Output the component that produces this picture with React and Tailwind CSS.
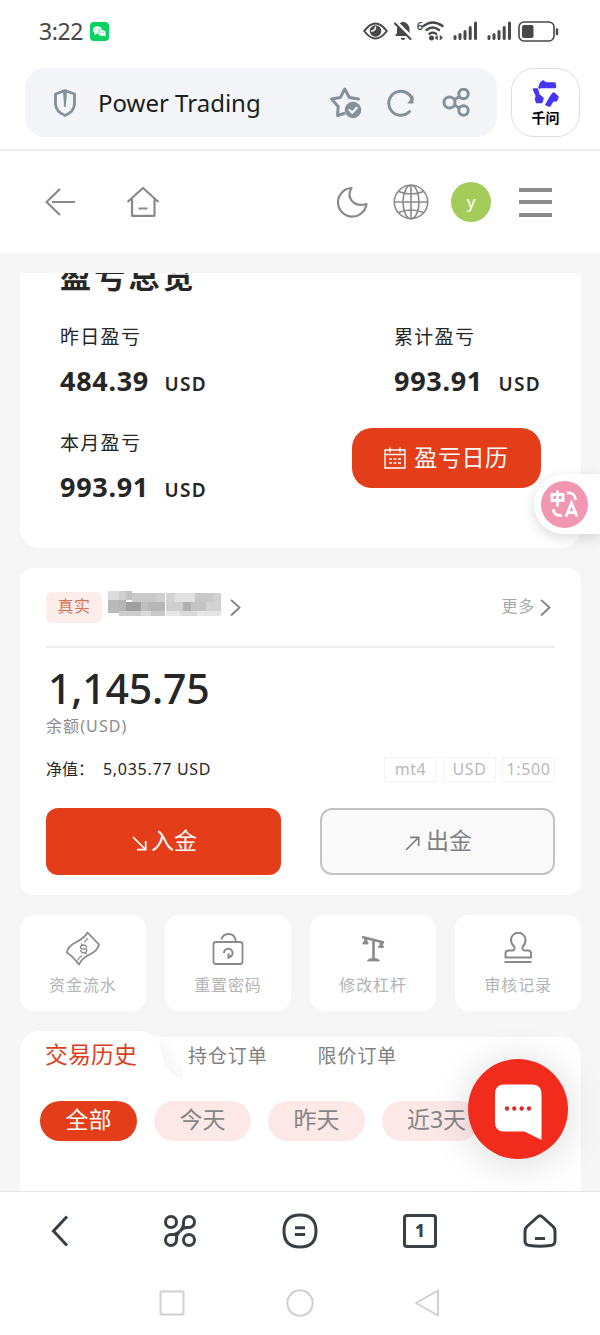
const STATS = [
  { label: "昨日盈亏", value: "484.39" },
  { label: "累计盈亏", value: "993.91" },
];

const FILTERS = ["全部", "今天", "昨天", "近3天"];

// hidden account number, drawn as blocks: x, y, width, height, grey
const MOSAIC = [
  [0, 0, 11, 9, "#dcdcdc"],
  [11, 0, 7, 9, "#cfcfcf"],
  [18, 0, 6, 9, "#c2c2c2"],
  [24, 2, 24, 9, "#c9c9c9"],
  [48, 2, 9, 9, "#cfcfcf"],
  [58, 2, 9, 9, "#d3d3d3"],
  [67, 2, 20, 9, "#e2e2e2"],
  [87, 2, 18, 9, "#c8c8c8"],
  [105, 2, 8, 9, "#d0d0d0"],
  [0, 9, 11, 13, "#bababa"],
  [11, 9, 7, 11, "#b5b5b5"],
  [18, 11, 15, 9, "#a0a0a0"],
  [33, 11, 7, 9, "#bebebe"],
  [40, 11, 17, 9, "#b6b6b6"],
  [58, 11, 17, 9, "#cecece"],
  [75, 11, 8, 9, "#b0b0b0"],
  [83, 11, 15, 9, "#c3c3c3"],
  [98, 11, 15, 9, "#d2d2d2"],
  [11, 20, 22, 5, "#cdcdcd"],
  [33, 20, 10, 5, "#d9d9d9"],
  [43, 20, 14, 5, "#c9c9c9"],
  [58, 20, 14, 5, "#e6e6e6"],
  [72, 20, 17, 5, "#dadada"],
  [89, 20, 24, 5, "#e5e5e5"],
];

function Signal() {
  return (
    <svg width="25" height="20" viewBox="0 0 25 20" stroke="#484848" strokeWidth="3" strokeLinecap="round">
      <path d="M2 17.5v-2M7 17.5v-4M12 17.5v-7M17.200 17.5v-11M22.500 17.5v-15.500" />
    </svg>
  );
}

function StatusBar() {
  return (
    <div className="h-[68px] flex items-center pl-[39px] pr-[41px] pb-[6px]">
      <span className="text-[23px] leading-[30px] tracking-[-0.4px] text-[#484848] w-[51px]">3:22</span>
      <svg width="19" height="19" viewBox="0 0 19 19">
        <rect width="19" height="19" rx="4" fill="#07d160" />
        <ellipse cx="7.500" cy="8" rx="4.500" ry="3.800" fill="#fff" />
        <path d="M4.500 10v3l3-1.500z" fill="#fff" />
        <ellipse cx="12" cy="11" rx="4" ry="3.300" fill="#fff" stroke="#07d160" strokeWidth=".6" />
        <path d="M13 13l2.400 1.800v-3z" fill="#fff" />
        <g fill="#07a850">
          <circle cx="6" cy="7" r=".6" />
          <circle cx="9" cy="7" r=".6" />
          <circle cx="10.700" cy="10.300" r=".5" />
          <circle cx="13.300" cy="10.300" r=".5" />
        </g>
      </svg>
      <div className="ml-auto flex items-center">
        <svg className="mr-[6px]" width="25" height="20" viewBox="0 0 25 20" fill="none" stroke="#484848" strokeWidth="2">
          <path d="M1.200 10Q12.500-5 23.800 10Q12.500 25 1.200 10z" />
          <circle cx="12.500" cy="10" r="5.800" fill="#484848" stroke="none" />
          <path d="M12.500 5.500a4 4 0 0 1 -4.500 4.500" stroke="#fff" strokeWidth="1.500" />
        </svg>
        <svg width="18" height="20" viewBox="0 0 18 20">
          <path d="M1 15L3 12V8.500Q3.200 2.500 9 .800Q15.500 2.500 15.500 8.500V12l1.500 3z" fill="#484848" />
          <path d="M6.500 17a2.600 2.600 0 0 0 5 0z" fill="#484848" />
          <path d="M3 2L18 17" stroke="#fff" strokeWidth="3.500" />
          <path d="M1 2.500L16.500 18" stroke="#484848" strokeWidth="2" strokeLinecap="round" />
        </svg>
        <span className="text-[11px] leading-[12px] font-semibold text-[#484848] ml-[5px] mb-[11px]">6</span>
        <svg className="ml-[-1px] mr-[9px]" width="22" height="20" viewBox="0 0 22 20" fill="none" stroke="#484848" strokeWidth="2.400" strokeLinecap="round">
          <path d="M1.500 5Q10.500-2 20.500 5" />
          <path d="M4.500 9Q10.500 3.800 17 9" />
          <path d="M7.500 12.800Q10.500 10.500 14 12.800" />
          <circle cx="9.500" cy="17" r="1.300" fill="#484848" />
          <path d="M15.500 14.500v4.500l-2.500-2.200zM18 14.500v4.500l2.500-2.200z" fill="#484848" strokeWidth=".5" />
        </svg>
        <Signal />
        <span className="w-[9px]" />
        <Signal />
        <svg className="ml-[6px]" width="41" height="21" viewBox="0 0 41 21">
          <rect x="1" y="1" width="35" height="19" rx="5" fill="none" stroke="#484848" strokeWidth="1.600" />
          <rect x="4" y="4" width="11.500" height="13" rx="2" fill="#484848" />
          <path d="M39 8.500v4.500" stroke="#484848" strokeWidth="2.400" strokeLinecap="round" />
        </svg>
      </div>
    </div>
  );
}

function AddressBar() {
  return (
    <div className="h-[83px] pl-[25px] pr-5 flex gap-[14px] items-start border-b-2 border-[#eeeeee]">
      <div className="h-[69px] w-[472px] rounded-[20px] bg-[#f3f5f8] flex items-center pl-[28px] pr-[26px]">
        <svg width="24" height="30" viewBox="0 0 24 30" fill="none" stroke="#85909a" strokeWidth="2.800" strokeLinejoin="round">
          <path d="M12 2.500L21.500 6V16Q21 24 12 27.500Q3 24 2.500 16V6z" />
          <path d="M10 3h4l-1.200 16h-1.600z" fill="#85909a" stroke="none" />
        </svg>
        <span className="ml-[21px] text-[24px] leading-[32px] tracking-[0px] text-[#1b1d20]">Power Trading</span>
        <svg className="ml-auto" width="33" height="33" viewBox="0 0 33 33" fill="none" stroke="#85909a" strokeWidth="3" strokeLinejoin="round" strokeLinecap="round">
          <path d="M15 27.500L8.500 29.500L9.200 20.500L2.500 13L11.300 11.500L15.800 3L20.300 11.500L29.500 13" />
          <circle cx="24" cy="24" r="8.300" fill="#85909a" stroke="none" />
          <path d="M20.500 24l2.700 2.700l4.500-4.800" stroke="#f3f5f8" strokeWidth="2.300" />
        </svg>
        <svg className="ml-[25px]" width="28" height="28" viewBox="0 0 28 28" fill="none" stroke="#85909a" strokeWidth="3" strokeLinecap="round">
          <path d="M22.500 22.500A12 12 0 1 1 25 10" />
          <path d="M26.500 5.500V14.500H20.500z" fill="#85909a" stroke="none" />
        </svg>
        <svg className="ml-[27px]" width="29" height="29" viewBox="0 0 29 29" fill="none" stroke="#85909a" strokeWidth="3">
          <circle cx="7.500" cy="14.500" r="5.500" />
          <circle cx="21.500" cy="6" r="4.700" />
          <circle cx="21.500" cy="22.500" r="4.700" />
          <path d="M12.300 11.700L17.500 8.500M12.300 17L17.500 20" />
        </svg>
      </div>
      <div className="size-[69px] rounded-[23px] border border-[#dedede] flex flex-col items-center pt-[11px]">
        <svg width="27" height="27" viewBox="0 0 27 27" fill="#4736f1" stroke="#4736f1" strokeWidth="2.500" strokeLinejoin="round">
          <path d="M9 3.500L11 1.500L14 3.500H22.500L23 7H9.500L7.500 7.500z" />
          <path d="M2 9.500H5L6.500 15L10.500 18.500L9.500 22H5L4 19L5 16z" />
          <path d="M21.500 13.500L25.500 17L24 20.500L21 20L17.500 25.500L14.500 24.500L18.500 17.500z" />
        </svg>
        <span className="text-[14px] leading-[20px] font-bold text-black mt-[1px]">千问</span>
      </div>
    </div>
  );
}

function PageHeader() {
  return (
    <div className="h-[102px] flex items-center pl-[45px] pr-[47px]">
      <svg width="31" height="30" viewBox="0 0 31 30" fill="none" stroke="#8a8a8a" strokeWidth="2.200">
        <path d="M15 2L1.500 15L15 28M7 15H30" />
      </svg>
      <svg className="ml-[51px]" width="32" height="32" viewBox="0 0 32 32" fill="none" stroke="#8a8a8a" strokeWidth="2.200" strokeLinejoin="round">
        <path d="M.500 16L16 2L31.500 16M5 13V29.800H27.500V13M11.500 22.500H20.500" />
      </svg>
      <svg className="ml-auto" width="32" height="32" viewBox="0 0 32 32" fill="none" stroke="#8a8a8a" strokeWidth="2.200" strokeLinejoin="round">
        <path d="M15.500 2A14.300 14.300 0 1 0 30.500 18Q21 21 15.500 14.500Q11.500 8.500 15.500 2z" />
      </svg>
      <svg className="ml-[25px]" width="36" height="36" viewBox="0 0 36 36" fill="none" stroke="#8a8a8a" strokeWidth="1.600">
        <circle cx="18" cy="18" r="16.700" />
        <ellipse cx="18" cy="18" rx="8" ry="16.700" />
        <path d="M18 1V35M1 18H35M5.500 7.500Q18 12.500 30.500 7.500M5.500 28.500Q18 23.500 30.500 28.500" />
      </svg>
      <span className="ml-[22px] size-10 rounded-full bg-[#a3cc5b] text-white text-[17px] leading-[36px] text-center pt-[2px]">y</span>
      <div className="ml-[28px] mr-[1px] w-[33px] flex flex-col gap-[8.500px]">
        <span className="h-[4px] bg-[#8a8a8a]" />
        <span className="h-[4px] bg-[#8a8a8a]" />
        <span className="h-[4px] bg-[#8a8a8a]" />
      </div>
    </div>
  );
}

function Stat({ label, value }) {
  return (
    <div className="w-[147px] h-[77px]">
      <div className="text-[19px] leading-[28px] tracking-[1.3px] text-[#262626]">{label}</div>
      <div className="mt-[12px] flex items-baseline justify-between leading-[36px] font-bold text-[#262626]">
        <span className="text-[27px] tracking-[0.7px]">{value}</span>
        <span className="text-[19px] font-semibold tracking-[1.3px]">USD</span>
      </div>
    </div>
  );
}

function Overview() {
  return (
    <div className="h-[275px] overflow-hidden rounded-b-[20px] bg-white px-[40px]">
      <h1 className="-mt-[20px] h-[70px] text-[31px] leading-[46px] font-bold tracking-[3.2px] text-[#262626]">盈亏总览</h1>
      <div className="flex justify-between">
        {STATS.map((s) => (
          <Stat key={s.label} {...s} />
        ))}
      </div>
      <div className="flex justify-between mt-[29px]">
        <Stat label="本月盈亏" value="993.91" />
        <button className="mt-[-1px] h-[60px] w-[189px] rounded-[20px] bg-[#e33e19] text-white flex items-center justify-center gap-[8px]">
          <svg width="22" height="22" viewBox="0 0 22 22" fill="none" stroke="#fff" strokeWidth="1.400">
            <path d="M1 3H21V21H1zM1 7.500H21M6 .500V5.500M16 .500V5.500M5 12H8M9.500 12H12.500M14 12H17M5 16H8M9.500 16H12.500M14 16H17" />
          </svg>
          <span className="text-[23px] leading-[30px] pb-[2px] tracking-[0.600px]">盈亏日历</span>
        </button>
      </div>
    </div>
  );
}

function Chevron() {
  return (
    <svg width="11" height="18" viewBox="0 0 11 18" fill="none" stroke="#808080" strokeWidth="1.800">
      <path d="M1 .800L9.500 8.500L1 16.500" />
    </svg>
  );
}

function Tag({ children }) {
  return (
    <span className="w-[53px] h-[25px] border border-[#f3f3f3] text-center text-[16px] leading-[22px] tracking-[0.6px] text-[#b9b9b9] whitespace-nowrap">
      {children}
    </span>
  );
}

function Account() {
  return (
    <div className="h-[327px] rounded-[14px] bg-white px-[26px] pt-[24px]">
      <div className="flex items-center h-[31px]">
        <span className="w-[56px] h-[31px] rounded-[6px] bg-[#fcecea] text-[#d5755d] text-[16px] leading-[29px] tracking-[0.5px] text-center">真实</span>
        <svg className="ml-[6px] mb-[8px]" width="113" height="25" viewBox="0 0 113 25" shapeRendering="crispEdges">
          {MOSAIC.map(([x, y, w, h, fill]) => (
            <rect key={`${x}-${y}`} x={x} y={y} width={w} height={h} fill={fill} />
          ))}
        </svg>
        <span className="w-[9px]" />
        <Chevron />
        <span className="ml-auto mr-[5px] mb-[3px] text-[16px] leading-[24px] tracking-[0.7px] text-[#a8a8a8]">更多</span>
        <span className="mr-[4px]">
          <Chevron />
        </span>
      </div>
      <div className="mt-[23px] h-[2px] bg-[#ededed]" />
      <div className="mt-[15px] h-[50px] pl-[2px] text-[41px] leading-[50px] tracking-[-0.2px] font-medium text-[#262626]">1,145.75</div>
      <div className="h-[24px] mt-[2px] text-[16px] leading-[23px] tracking-[1.1px] text-[#8c8c8c]">余额(USD)</div>
      <div className="flex mt-[18px] h-[26px]">
        <span className="w-[57px] text-[16px] leading-[25px] text-[#262626]">净值：</span>
        <span className="text-[16px] leading-[25px] tracking-[0.7px] text-[#262626]">5,035.77 USD</span>
        <div className="ml-auto flex gap-[6px]">
          <Tag>mt4</Tag>
          <Tag>USD</Tag>
          <Tag>1:500</Tag>
        </div>
      </div>
      <div className="mt-[25px] flex justify-between">
        <button className="h-[67px] w-[235px] rounded-[12px] bg-[#e33e19] text-white flex items-center justify-center gap-[4px] pb-[3px] pl-[2px] text-[23px] leading-[30px]">
          <svg className="mt-[7px]" width="15" height="15" viewBox="0 0 15 15" fill="none" stroke="#fff" strokeWidth="1.700">
            <path d="M1 1L13.500 13.500M5 13.700H13.700V5" />
          </svg>
          入金
        </button>
        <button className="h-[67px] w-[235px] rounded-[12px] border-2 border-[#c3c3c3] bg-[#f9f9f9] text-[#808080] flex items-center justify-center gap-[6px] pb-[3px] pl-[2px] text-[23px] leading-[30px]">
          <svg className="mt-[6px]" width="15" height="15" viewBox="0 0 15 15" fill="none" stroke="#808080" strokeWidth="1.700">
            <path d="M1 14L13.500 1.500M5 1.300H13.700V10" />
          </svg>
          出金
        </button>
      </div>
    </div>
  );
}

function Shortcut({ label, children }) {
  return (
    <div className="h-[96px] rounded-[14px] bg-white flex flex-col items-center pt-[15px]">
      <svg width="36" height="36" viewBox="0 0 36 36" fill="none" stroke="#8a8a8a" strokeWidth="1.800" strokeLinejoin="round">
        {children}
      </svg>
      <span className="mt-[8px] text-[16px] leading-[22px] tracking-[0.9px] text-[#b3b3b3]">{label}</span>
    </div>
  );
}

function Shortcuts() {
  return (
    <div className="grid grid-cols-4 gap-x-[19.5px]">
      <Shortcut label="资金流水">
        <path d="M22.500 2.500L34 14.500Q32 21.500 24.500 24.500Q17.500 27.500 14 34.500Q7 25.500 1.800 22.500Q2.500 16.500 11 12.200Q19.500 8 22.500 2.500z" />
        <path d="M23 8Q21 11 19 12.200M12.500 30.500Q14 27.500 17 25.500" strokeWidth="1.200" />
        <path d="M21.800 17.500Q20.500 14.500 17.500 15.200Q14.500 16.500 16 18.500Q17 19.500 19 18.800Q21.800 18.300 21.800 20.500Q20.500 23.800 17.500 22.500Q15.500 21.500 15.500 20M16.200 13.500L17.200 15.200M20.500 22.500L21.500 24" strokeWidth="1.400" />
      </Shortcut>
      <Shortcut label="重置密码">
        <rect x="3.500" y="12" width="29" height="22" rx="2.500" />
        <path d="M11.500 9.500A7.200 7.200 0 0 1 25.500 9.500V12" />
        <path d="M14 23A4.300 4.300 0 1 1 19 27.200M22.500 24.500L18.500 28V23.500" strokeWidth="2" />
      </Shortcut>
      <Shortcut label="修改杠杆">
        <path d="M7 7L29 12.500" strokeWidth="2.600" />
        <path d="M18.500 9V29" strokeWidth="2.600" />
        <path d="M12.500 31Q13 28.500 18.500 28.500Q24 28.500 24.500 31zM9.500 8.500V12H8V14H13V12H12V8.500zM25 12.500V16H23.500V17.500H28.500V16H27.500V12.500z" fill="#8a8a8a" strokeWidth=".8" />
      </Shortcut>
      <Shortcut label="审核记录">
        <path d="M5.500 27.500V23.500Q5.500 20.500 9 20.500H12.500Q15 20 14.500 17Q11 14 11 10A7 7 0 0 1 25.500 10Q25.500 14 22.500 17Q22 20 24.500 20.500H28Q31 20.500 31 23.500V27.500zM4.500 32H31.500" strokeWidth="2" />
      </Shortcut>
    </div>
  );
}

function History() {
  return (
    <div className="relative h-[160px] pt-[6px]">
      <div className="h-full rounded-t-[20px] bg-white pt-[5px] overflow-hidden">
        <div className="relative z-10 h-[28px] flex items-center pl-[168px] gap-[50px] text-[19px] leading-[28px] tracking-[0.9px] text-[#808080]">
          <span>持仓订单</span>
          <span>限价订单</span>
        </div>
        <div className="mt-[31px] pl-5 flex gap-[17px]">
          {FILTERS.map((f, i) => (
            <button
              key={f}
              className={
                i === 0
                  ? "h-[40px] w-[97px] shrink-0 rounded-full bg-[#e33e19] text-white text-[23px] leading-[37px] pb-[3px]"
                  : "h-[40px] w-[97px] shrink-0 rounded-full bg-[#fce9e7] text-[#858585] text-[23px] leading-[37px] pb-[3px]"
              }
            >
              <span className={f.length > 2 ? "ml-[12px] whitespace-nowrap" : ""}>{f}</span>
            </button>
          ))}
        </div>
      </div>
      {/* raised active tab */}
      <svg className="absolute left-[130px] top-[8px]" width="60" height="44" viewBox="0 0 60 44">
        <defs>
          <linearGradient id="fold" gradientUnits="userSpaceOnUse" x1="14" y1="34" x2="34" y2="22">
            <stop offset="0" stopColor="#f4f4f4" />
            <stop offset="1" stopColor="#fff" />
          </linearGradient>
        </defs>
        <path d="M8 0Q11 12 15 25Q20 37 33 41V0z" fill="url(#fold)" />
      </svg>
      <div className="absolute left-0 top-0 h-[40px] w-[140px] rounded-t-[20px] bg-white pl-[25px] text-[23px] leading-[47px] text-[#db3f1e]">
        交易历史
      </div>
    </div>
  );
}

function BottomNav() {
  return (
    <div className="h-[144px] border-t border-[#e4e4e4] bg-white relative">
      <div className="grid grid-cols-5 h-[78px] place-items-center text-[#384046]">
        <svg width="36" height="36" viewBox="0 0 36 36" fill="none" stroke="currentColor" strokeWidth="3">
          <path d="M25 3.500L11.500 18L25 32.500" />
        </svg>
        <svg width="36" height="36" viewBox="0 0 36 36" fill="none" stroke="currentColor" strokeWidth="3">
          <circle cx="9" cy="9" r="5.500" />
          <circle cx="27" cy="27" r="5.500" />
          <path d="M27 14.500A5.500 5.500 0 1 0 21.500 9V11.500Q21.500 14.500 18 18Q21.500 14.500 24.500 14.500z" />
          <path d="M9 21.500A5.500 5.500 0 1 0 14.500 27V24.500Q14.500 21.500 18 18Q14.500 21.500 11.500 21.500z" />
        </svg>
        <svg width="36" height="36" viewBox="0 0 36 36" fill="none" stroke="currentColor" strokeWidth="3">
          <path d="M18 2Q34 2 34 18Q34 34 18 34Q2 34 2 18Q2 2 18 2z" />
          <path d="M13 14.700H23M13 21.500H23" />
        </svg>
        <div className="size-[34px] rounded-[4px] border-[3px] border-current text-center text-[17px] leading-[28px] font-extrabold">1</div>
        <svg width="36" height="36" viewBox="0 0 36 36" fill="none" stroke="currentColor" strokeWidth="3" strokeLinejoin="round">
          <path d="M15.500 4Q18 1.500 20.500 4L31 13.500Q33 15.500 33 18V28Q33 32 28.500 32.500Q18 34 7.500 32.500Q3 32 3 28V18Q3 15.500 5 13.500z" />
          <path d="M13 25.500H23" />
        </svg>
      </div>
      <div className="flex items-center justify-center gap-[100px] h-[66px] pr-[1px]">
        <svg width="28" height="28" viewBox="0 0 28 28" fill="none" stroke="#d0d0d0" strokeWidth="2">
          <rect x="2.500" y="2.500" width="23" height="23" rx="1" />
        </svg>
        <svg width="28" height="28" viewBox="0 0 28 28" fill="none" stroke="#d0d0d0" strokeWidth="2">
          <circle cx="14" cy="14" r="12.700" />
        </svg>
        <svg width="28" height="28" viewBox="0 0 28 28" fill="none" stroke="#d0d0d0" strokeWidth="2" strokeLinejoin="round">
          <path d="M24 1.500V26.500L2 14z" />
        </svg>
      </div>
    </div>
  );
}

export default function App() {
  return (
    <div className="relative w-[600px] h-[1335px] overflow-hidden bg-white font-['Noto_Sans','Noto_Sans_CJK_SC',sans-serif]">
      <StatusBar />
      <AddressBar />
      <PageHeader />
      <main className="h-[938px] bg-[#f6f6f6] pt-5 pl-5 pr-[19px] flex flex-col gap-5 overflow-hidden relative">
        <Overview />
        <Account />
        <Shortcuts />
        <History />
        {/* translate bubble */}
        <div className="absolute right-0 top-[221px] h-[60px] w-[66px] rounded-l-full bg-white shadow-[0_4px_14px_rgba(0,0,0,0.14)] pl-[7px] pt-[6.500px]">
          <svg width="47" height="47" viewBox="0 0 47 47" fill="none" stroke="#fff" strokeWidth="2.800">
            <circle cx="23.500" cy="23.500" r="23.500" fill="#f197b2" stroke="none" />
            <path d="M11 13.500H22V19.500H11zM16.500 9.500V25.500" />
            <path d="M26 12Q34 11 34.500 19M12.500 28Q12.500 35 21 34.500" />
            <path d="M25 35.500L30.500 22L36 35.500M27 31.500H34" />
          </svg>
        </div>
        <button className="absolute left-[468px] top-[806px] size-[100px] rounded-full bg-[#f22c1c] shadow-[0_4px_40px_rgba(0,0,0,0.15)]">
          <svg width="100" height="100" viewBox="0 0 100 100">
            <path d="M36 25.500H64Q73.500 25.500 73.500 35V81L56.500 72.500H36Q27 72.500 27 63.500V35Q27 25.500 36 25.500z" fill="#fff" />
            <g fill="#d32f2f">
              <circle cx="39" cy="49.500" r="2.200" />
              <circle cx="46.300" cy="49.500" r="2.200" />
              <circle cx="53.700" cy="49.500" r="2.200" />
              <circle cx="61" cy="49.500" r="2.200" />
            </g>
          </svg>
        </button>
      </main>
      <BottomNav />
    </div>
  );
}
